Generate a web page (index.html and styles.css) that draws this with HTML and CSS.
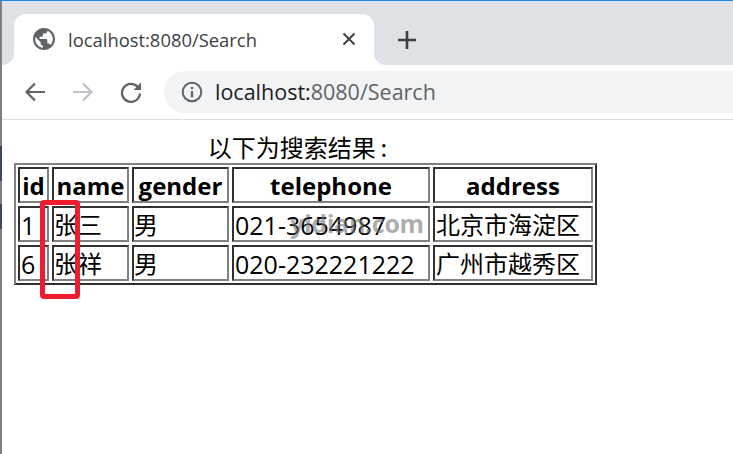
FILE: index.html
```html
<!DOCTYPE html>
<html lang="zh">
<head>
<meta charset="utf-8">
<title>localhost:8080/Search</title>
<link rel="stylesheet" href="styles.css">
</head>
<body>
<div class="tabstrip">
  <div class="tab">
    <svg class="globe" width="22" height="22" viewBox="2 2 20 20"><path fill="#5f6368" d="M12 2C6.480 2 2 6.480 2 12s4.480 10 10 10 10-4.480 10-10S17.520 2 12 2zm-1 17.930c-3.950-.490-7-3.850-7-7.930 0-.620.080-1.210.210-1.790L9 15v1c0 1.100.900 2 2 2v1.930zm6.900-2.540c-.260-.810-1-1.390-1.900-1.390h-1v-3c0-.550-.450-1-1-1H8v-2h2c.550 0 1-.450 1-1V7h2c1.100 0 2-.900 2-2v-.410c2.930 1.190 5 4.060 5 7.410 0 2.080-.800 3.970-2.100 5.390z"/></svg>
    <span class="tab-title">localhost:8080/Search</span>
    <svg class="close" width="14" height="14" viewBox="0 0 14 14"><path d="M1.500 1.500l11 11M12.500 1.500l-11 11" stroke="#3c4043" stroke-width="2" fill="none"/></svg>
  </div>
  <svg class="plus" width="20" height="20" viewBox="0 0 20 20"><path d="M10 1v18M1 10h18" stroke="#3c4043" stroke-width="2.600" fill="none"/></svg>
</div>
<div class="toolbar">
  <svg class="nav" width="22" height="22" viewBox="0 0 22 22"><path d="M21 11H3M11 2.500L2.500 11l8.500 8.500" stroke="#5f6368" stroke-width="2.200" fill="none"/></svg>
  <svg class="nav" width="22" height="22" viewBox="0 0 22 22"><path d="M1 11h18M11 2.500l8.500 8.500-8.500 8.500" stroke="#bdc1c6" stroke-width="2.200" fill="none"/></svg>
  <svg class="nav" width="22" height="22" viewBox="0 0 22 22"><path d="M18 6.200A9 9 0 1 0 20 12.500" stroke="#5f6368" stroke-width="2.300" fill="none"/><path d="M21 1.500v7.500h-7.500z" fill="#5f6368"/></svg>
  <div class="omnibox">
    <svg class="info" width="22" height="22" viewBox="0 0 22 22"><circle cx="11" cy="11" r="9.300" stroke="#5f6368" stroke-width="2" fill="none"/><path d="M11 10v6.500" stroke="#5f6368" stroke-width="2.200"/><circle cx="11" cy="7" r="1.300" fill="#5f6368"/></svg>
    <span class="url"><span class="host">localhost:</span>8080/Search</span>
  </div>
</div>
<main class="page">
  <div class="results">
    <p class="heading">以下为搜索结果&#8201;:</p>
    <table class="grid">
      <colgroup>
        <col class="c-id"><col class="c-name"><col class="c-gender"><col class="c-tel"><col class="c-addr">
      </colgroup>
      <thead>
        <tr><th>id</th><th>name</th><th>gender</th><th>telephone</th><th>address</th></tr>
      </thead>
      <tbody>
        <tr><td class="num">1</td><td class="tight">张三</td><td class="tight">男</td><td class="num">021-3654987</td><td>北京市海淀区</td></tr>
        <tr><td class="num">6</td><td class="tight">张祥</td><td class="tight">男</td><td class="num">020-232221222</td><td>广州市越秀区</td></tr>
      </tbody>
    </table>
  </div>
</main>
<span class="edge edge-a"></span>
<span class="edge edge-b"></span>
<span class="watermark">yidian.com</span>
<span class="marker"></span>
</body>
</html>
```

FILE: styles.css
```css
* { box-sizing: border-box; }
html, body { margin: 0; height: 100%; overflow: hidden; }
body {
  position: relative;
  background: #fff;
  padding-left: 2px;
  border-top: 1px solid #1a87e0;
  font-family: "Open Sans", "Noto Sans CJK SC", sans-serif;
  color: #000;
}
body::before {
  content: "";
  position: absolute;
  left: 0;
  top: 0;
  bottom: 0;
  width: 2px;
  background: #7f7f7f;
}
.tabstrip {
  height: 64px;
  background: #dee1e6;
  padding: 13px 0 0 12px;
  display: flex;
  align-items: flex-start;
}
.tab {
  position: relative;
  width: 360px;
  height: 51px;
  background: #fff;
  border-radius: 12px 12px 0 0;
  display: flex;
  align-items: center;
  padding: 0 18px 0 19px;
}
.tab::before, .tab::after {
  content: "";
  position: absolute;
  bottom: 0;
  width: 12px;
  height: 12px;
}
.tab::before {
  left: -12px;
  background: radial-gradient(circle at 0 0, #dee1e6 11.5px, #fff 12.5px);
}
.tab::after {
  right: -12px;
  background: radial-gradient(circle at 100% 0, #dee1e6 11.5px, #fff 12.5px);
}
.globe { flex: none; margin-top: -2px; }
.tab-title {
  flex: 1;
  margin-left: 13px;
  font-size: 18.400px;
  color: #3c4043;
  white-space: nowrap;
}
.close { flex: none; margin-top: -2px; }
.plus { flex: none; margin: 16px 0 0 23px; }
.toolbar {
  height: 55px;
  background: #fff;
  border-bottom: 1px solid #dadce0;
  display: flex;
  align-items: flex-start;
  padding: 6px 0 0 22px;
}
.nav { flex: none; margin: 10px 26px 0 0; }
.omnibox {
  flex: 1;
  height: 42px;
  margin-left: -4px;
  background: #f1f3f4;
  border-radius: 21px 0 0 21px;
  display: flex;
  align-items: center;
  padding-left: 17px;
}
.info { flex: none; }
.url {
  margin-left: 12px;
  margin-top: -2px;
  font-size: 21.500px;
  color: #5f6368;
  white-space: nowrap;
}
.host { color: #202124; }
.page { padding: 0 0 0 12px; }
.results { width: 584px; }
.heading {
  margin: 0;
  height: 43px;
  padding: 11px 17px 0 0;
  font-size: 24px;
  line-height: 32px;
  text-align: center;
  font-family: "Noto Sans CJK SC", sans-serif;
}
.grid {
  table-layout: fixed;
  width: 583px;
  border-collapse: separate;
  border-spacing: 3px;
  border: 1px solid;
  border-color: #808080 #303030 #303030 #808080;
  box-shadow: inset 1px 1px 0 #808080, inset -1px -1px 0 #303030;
  font-size: 24px;
}
.c-id { width: 31px; }
.c-name { width: 77px; }
.c-gender { width: 97px; }
.c-tel { width: 198px; }
.c-addr { width: 160px; }
.grid th, .grid td {
  height: 36px;
  padding: 2px 1px 0;
  border: 2px solid;
  border-color: #303030 #808080 #808080 #303030;
  white-space: nowrap;
  overflow: hidden;
  line-height: 30px;
}
.grid th { font-weight: 700; text-align: center; }
.grid td { text-align: left; }
.grid td.num { font-size: 25px; }
.grid td.tight { padding-left: 0; }
.edge {
  position: absolute;
  left: 0;
  width: 2px;
  background: #39465e;
}
.edge-a { top: 145px; height: 35px; }
.edge-b { top: 203px; height: 25px; }
.watermark {
  position: absolute;
  left: 290px;
  top: 204px;
  font-family: "Open Sans", sans-serif;
  font-size: 25px;
  font-weight: 700;
  line-height: 36px;
  letter-spacing: -.3px;
  color: rgba(120, 120, 120, .6);
  white-space: nowrap;
}
.marker {
  position: absolute;
  left: 40px;
  top: 199px;
  width: 40px;
  height: 99px;
  border: 5px solid #ee1c2e;
  border-radius: 4px;
}
```
